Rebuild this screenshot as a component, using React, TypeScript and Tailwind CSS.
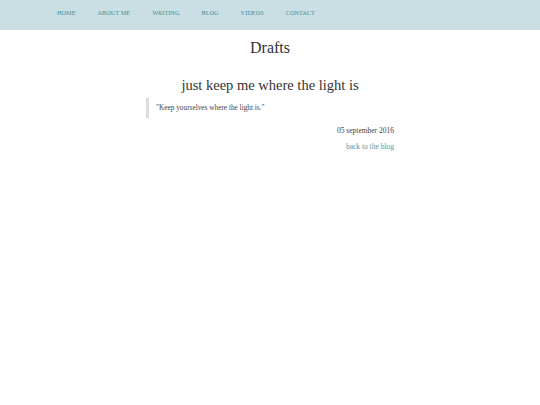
import React from "react";

export default function App() {
  const links = ["HOME", "ABOUT ME", "WRITING", "BLOG", "VIDEOS", "CONTACT"];
  return (
    <div className="min-h-[405px] w-full bg-white font-['Liberation_Serif','Times_New_Roman',serif] text-[#3a3a3a]">
      <nav className="flex h-[30px] items-center gap-[22px] bg-[#cadfe3] pb-[3px] pl-[57px]">
        {links.map((l) => (
          <a key={l} href="#" className="text-[6.3px] leading-none text-[#3f8f9c]">
            {l}
          </a>
        ))}
      </nav>
      <div className="mt-[8px] text-center text-[16px] leading-[20px] text-[#333]">Drafts</div>
      <div className="mx-auto mt-[17px] w-[248px]">
        <div className="-mx-[20px] whitespace-nowrap text-center text-[14.5px] leading-[20px] text-[#333]">
          just keep me where the light is
        </div>
        <div className="mt-[3px] flex h-[20px] items-center border-l-[3px] border-[#dcdcdc] pl-[7px] text-[7.3px] text-[#444]">
          "Keep yourselves where the light is."
        </div>
        <p className="mt-[7px] text-right text-[7.5px] leading-[12px] text-[#444]">05 september 2016</p>
        <p className="mt-[4px] text-right text-[7.5px] leading-[12px]">
          <a href="#" className="text-[#4a9aab]">back to the blog</a>
        </p>
      </div>
    </div>
  );
}
